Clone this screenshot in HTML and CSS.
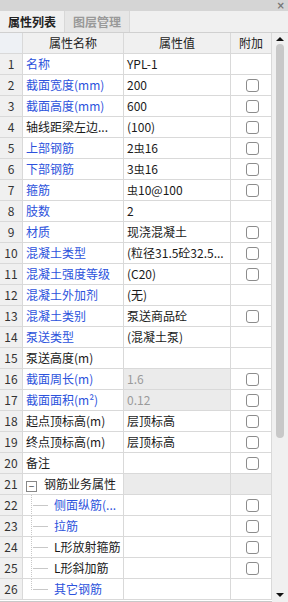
FILE: index.html
```html
<!DOCTYPE html>
<html>
<head>
    <title>属性列表</title>
    <link rel="stylesheet" href="styles.css">
</head>
<body>
  <div class="panel">
    <div class="titlebar"><span class="close">×</span></div>
    <div class="tabs">
      <div class="tab active">属性列表</div>
      <div class="tab">图层管理</div>
    </div>
    <div class="gridwrap">
      <div class="grid" id="grid">
        <div class="row head">
          <div class="cell num"></div>
          <div class="cell name">属性名称</div>
          <div class="cell val">属性值</div>
          <div class="cell add">附加</div>
        </div>
      </div>
      <div class="scrollbar">
        <div class="arrow up"></div>
        <div class="thumb"></div>
        <div class="arrow down"></div>
      </div>
    </div>
  </div>

  <script>
    // name, value, blue label, has checkbox, extra flags
    const rows = [
        ["名称", "YPL-1", true, false],
        ["截面宽度(mm)", "200", true, true],
        ["截面高度(mm)", "600", true, true],
        ["轴线距梁左边...", "(100)", false, true],
        ["上部钢筋", "2虫16", true, true],
        ["下部钢筋", "3虫16", true, true],
        ["箍筋", "虫10@100", true, true],
        ["肢数", "2", true, false],
        ["材质", "现浇混凝土", true, true],
        ["混凝土类型", "(粒径31.5砼32.5...", true, true],
        ["混凝土强度等级", "(C20)", true, true],
        ["混凝土外加剂", "(无)", true, false],
        ["混凝土类别", "泵送商品砼", true, true],
        ["泵送类型", "(混凝土泵)", true, false],
        ["泵送高度(m)", "", false, false],
        ["截面周长(m)", "1.6", true, true, "locked"],
        ["截面面积(m²)", "0.12", true, true, "locked"],
        ["起点顶标高(m)", "层顶标高", false, true],
        ["终点顶标高(m)", "层顶标高", false, true],
        ["备注", "", false, true],
        ["钢筋业务属性", "", false, false, "group"],
        ["侧面纵筋(...", "", true, true, "child"],
        ["拉筋", "", true, true, "child"],
        ["L形放射箍筋", "", false, true, "child"],
        ["L形斜加筋", "", false, true, "child"],
        ["其它钢筋", "", true, false, "child last"]
    ];

    const grid = document.getElementById("grid");

    for (let i = 0; i < rows.length; i++) {
        const [name, value, blue, check, flag] = rows[i];
        const row = document.createElement("div");
        row.className = "row" + (flag ? " " + flag : "");

        let nameHtml = name;
        if (flag === "group") {
            nameHtml = '<span class="toggle">−</span>' + name;
        } else if (flag && flag.indexOf("child") === 0) {
            nameHtml = '<span class="branch"></span>' + name;
        }

        row.innerHTML =
            '<div class="cell num">' + (i + 1) + '</div>' +
            '<div class="cell name' + (blue ? ' blue' : '') + '">' + nameHtml + '</div>' +
            '<div class="cell val">' + value.replace("虫", '<span class="bar">虫</span>') + '</div>' +
            '<div class="cell add">' + (check ? '<span class="box"></span>' : '') + '</div>';
        grid.appendChild(row);
    }
  </script>
</body>
</html>
```

FILE: styles.css
```css
body {
    margin: 0;
    font-family: "Noto Sans CJK SC", "Liberation Sans", sans-serif;
    font-size: 12px;
    color: #1a1a1a;
}
.panel {
    width: 288px;
    height: 602px;
    overflow: hidden;
    background: #f0f0f0;
}
.titlebar {
    height: 11px;
    background: #d5d5d5;
    display: flex;
    justify-content: flex-end;
    align-items: center;
    padding-right: 3px;
}
.close {
    font-size: 10px;
    line-height: 11px;
    color: #777;
    font-family: "DejaVu Sans", sans-serif;
    font-weight: bold;
}
.tabs {
    height: 21px;
    display: flex;
    background: #f0f0f0;
    border-bottom: 1px solid #d0d0d0;
}
.tab {
    width: 64px;
    line-height: 21px;
    text-align: center;
    font-weight: bold;
    color: #999;
    background: #e6e6e6;
    border-right: 1px solid #d8d8d8;
}
.tab.active {
    color: #222;
    background: #f0f0f0;
}
.gridwrap {
    display: flex;
    height: 569px;
}
.grid {
    width: 272px;
    background: #fff;
    border-bottom: 1px solid #c8c8c8;
}
.row {
    display: flex;
    height: 21px;
    box-sizing: border-box;
    border-bottom: 1px solid #d9d9d9;
}
.cell {
    box-sizing: border-box;
    border-right: 1px solid #d9d9d9;
    line-height: 20px;
    padding-left: 3px;
    white-space: nowrap;
    overflow: hidden;
    position: relative;
}
.num {
    width: 23px;
    padding: 0;
    text-align: center;
    background: #f0f0f0;
    color: #333;
}
.name {
    width: 101px;
}
.val {
    width: 107px;
}
.add {
    width: 41px;
    display: flex;
    align-items: center;
    justify-content: center;
}
.head .cell {
    background: #f0f0f0;
    text-align: center;
    padding: 0;
    color: #222;
}
.head .num {
    background: #eef1f5;
}
.blue {
    color: #2c52dc;
}
.bar {
    font-size: 11px;
}
.box {
    width: 11px;
    height: 11px;
    border: 1px solid #8c8c8c;
    border-radius: 3px;
    background: #fff;
}
.locked .val {
    background: #ebebeb;
    color: #9a9a9a;
}
.group .val,
.group .add {
    background: #ebebeb;
}
.toggle {
    display: inline-block;
    width: 9px;
    height: 9px;
    border: 1px solid #888;
    line-height: 8px;
    text-align: center;
    font-size: 10px;
    color: #444;
    margin: 0 7px 0 0;
    vertical-align: -1px;
    background: #fff;
}
.child .name {
    padding-left: 31px;
}
.branch {
    position: absolute;
    left: 8px;
    top: 0;
    width: 16px;
    height: 21px;
    border-left: 1px dotted #c8c8c8;
}
.branch::after {
    content: "";
    position: absolute;
    left: 1px;
    top: 10px;
    width: 15px;
    border-top: 1px solid #c8c8c8;
}
.child.last .branch {
    height: 11px;
}
.scrollbar {
    width: 16px;
    background: #f0f0f0;
    position: relative;
}
.arrow {
    position: absolute;
    left: 4px;
    width: 0;
    height: 0;
    border-left: 4px solid transparent;
    border-right: 4px solid transparent;
}
.arrow.up {
    top: 4px;
    border-bottom: 4px solid #111;
}
.arrow.down {
    bottom: 5px;
    border-top: 4px solid #111;
}
.thumb {
    position: absolute;
    left: 4px;
    top: 11px;
    width: 8px;
    height: 394px;
    background: #c8c8c8;
    border-radius: 4px;
}
```
